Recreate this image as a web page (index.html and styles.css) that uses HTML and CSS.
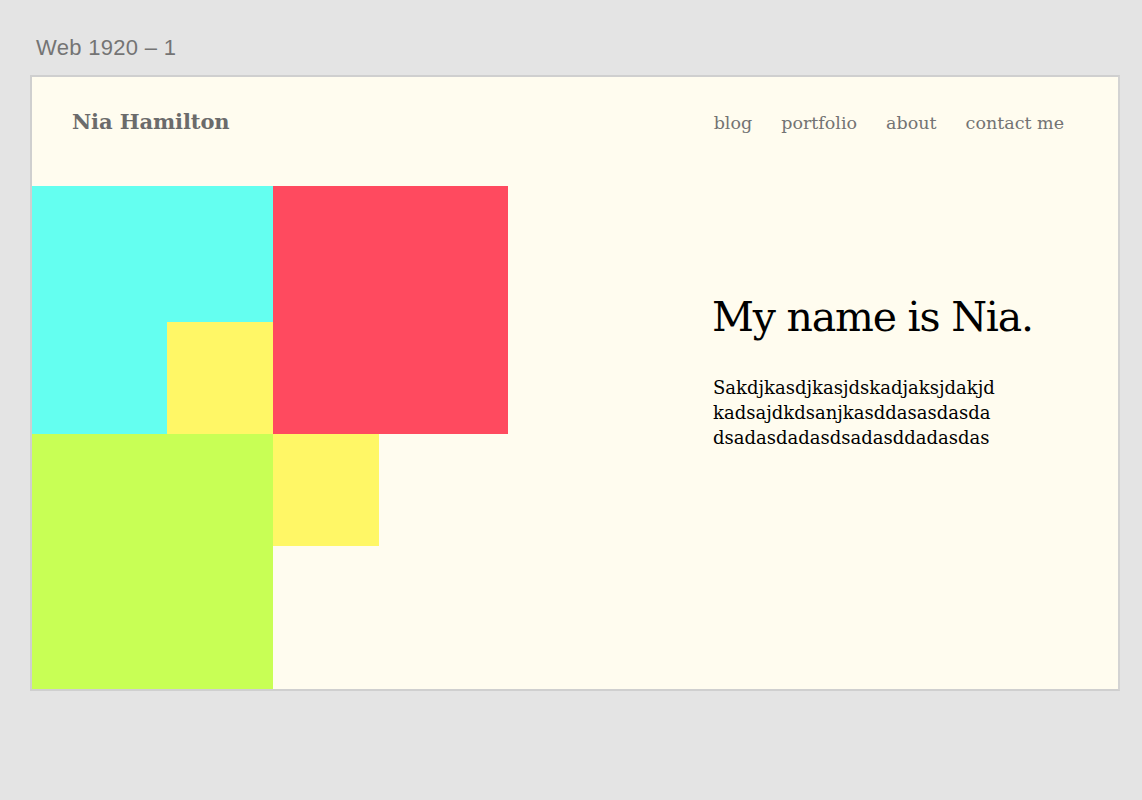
FILE: index.html
```html
<!DOCTYPE html>
<html lang="en">
<head>
<meta charset="utf-8">
<title>Web 1920 – 1</title>
<link rel="stylesheet" href="styles.css">
</head>
<body>
  <div class="canvas-label">Web 1920 – 1</div>
  <div class="artboard">
    <header class="site-header">
      <div class="logo">Nia Hamilton</div>
      <nav class="nav">
        <a href="#">blog</a>
        <a href="#">portfolio</a>
        <a href="#">about</a>
        <a href="#">contact me</a>
      </nav>
    </header>
    <main class="hero">
      <div class="blocks">
        <div class="block cyan"></div>
        <div class="block yellow-a"></div>
        <div class="block red"></div>
        <div class="block lime"></div>
        <div class="block yellow-b"></div>
      </div>
      <div class="intro">
        <h1 class="intro-title">My name is Nia.</h1>
        <p class="intro-text">Sakdjkasdjkasjdskadjaksjdakjd kadsajdkdsanjkasddasasdasda dsadasdadasdsadasddadasdas</p>
      </div>
    </main>
  </div>
</body>
</html>
```
FILE: styles.css
```css
html, body {
  margin: 0;
  padding: 0;
}
body {
  background: #e4e4e4;
  width: 1142px;
  height: 800px;
  overflow: hidden;
  font-family: "DejaVu Serif", serif;
}
.canvas-label {
  font-family: "Liberation Sans", Arial, sans-serif;
  font-size: 22px;
  letter-spacing: 0.3px;
  color: #747474;
  padding: 36px 0 0 36px;
  height: 75px;
  line-height: 24px;
  box-sizing: border-box;
}
.artboard {
  margin-left: 30px;
  width: 1090px;
  height: 616px;
  border: 2px solid #cfcfcf;
  border-right-color: #d3d3d3;
  box-sizing: border-box;
  background: #fffcef;
  overflow: hidden;
}
.site-header {
  height: 109px;
  display: flex;
  align-items: baseline;
  justify-content: space-between;
  padding: 32px 54px 0 40px;
  box-sizing: border-box;
}
.logo {
  font-weight: bold;
  font-size: 21px;
  color: #6b6b6b;
  letter-spacing: -0.1px;
}
.nav {
  display: flex;
  align-items: baseline;
  gap: 29px;
}
.nav a {
  font-size: 17.5px;
  color: #737373;
  text-decoration: none;
}
.hero {
  display: flex;
  align-items: flex-start;
}
.blocks {
  display: grid;
  grid-template-columns: 135px 106px 106px 129px;
  grid-template-rows: 136px 112px 112px 143px;
  width: 476px;
}
.cyan {
  grid-column: 1 / 3;
  grid-row: 1 / 3;
  background: #64fff0;
}
.yellow-a {
  grid-column: 2 / 3;
  grid-row: 2 / 3;
  background: #fff766;
}
.red {
  grid-column: 3 / 5;
  grid-row: 1 / 3;
  background: #ff4a5f;
}
.lime {
  grid-column: 1 / 3;
  grid-row: 3 / 5;
  background: #c8ff55;
}
.yellow-b {
  grid-column: 3 / 4;
  grid-row: 3 / 4;
  background: #fff766;
}
.intro {
  margin-left: 204px;
  padding-top: 106px;
}
.intro-title {
  margin: 0;
  font-weight: normal;
  font-size: 41px;
  letter-spacing: -1.2px;
  line-height: 50px;
  color: #000;
}
.intro-text {
  margin: 33px 0 0 1px;
  width: 310px;
  font-size: 18px;
  line-height: 25px;
  color: #000;
}
```
